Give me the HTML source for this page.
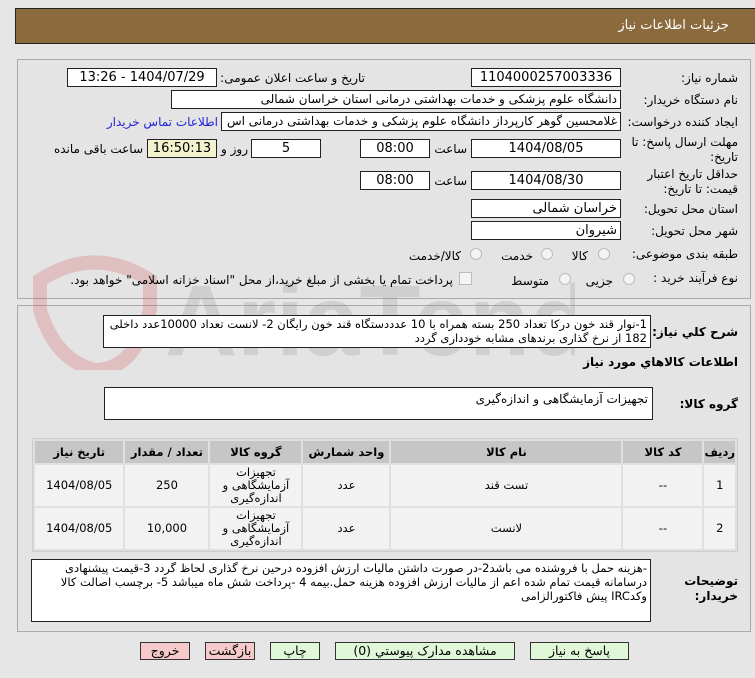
<!DOCTYPE html>
<html><head><meta charset="utf-8"><style>
*{box-sizing:border-box;margin:0;padding:0}
body{width:755px;height:678px;background:#e6e6e6;font-family:"DejaVu Sans",sans-serif;font-size:12px;color:#000;position:relative;overflow:hidden}
.a{position:absolute;white-space:nowrap}
.hd{left:15px;top:8px;width:745px;height:36px;background:#8b6a3e;border:1px solid #222;}
.hd span{position:absolute;right:30px;top:9px;color:#fff;font-size:13px}
.pn{position:absolute;border:1px solid #aaa;background:#e4e4e4}
.in{position:absolute;background:#fff;border:1px solid #222;height:19px;direction:rtl;text-align:center;line-height:17px;font-size:13px;overflow:hidden;white-space:nowrap}
.lb{position:absolute;direction:rtl;text-align:right;white-space:nowrap;font-size:12px}
.ta{position:absolute;background:#fff;border:1px solid #222;direction:rtl;text-align:right;padding:2px 4px;font-size:12px;line-height:20px}
.rd{position:absolute;width:12px;height:12px;border-radius:50%;border:1px solid #bbb;background:#f4f4f4}
table{position:absolute;left:32px;top:438px;width:706px;border-collapse:separate;border-spacing:2px;background:#e0e0e0;border:1px solid #ccc;direction:rtl}
th{background:#c6c6c6;height:22px;font-size:11.5px}
td{background:#f2f2f2;height:41px;text-align:center;font-size:11.5px;line-height:13px}
.bt{position:absolute;top:642px;height:18px;border:1px solid #333;font-size:12.5px;text-align:center;line-height:16px;direction:rtl}
</style></head><body>
<div class="a hd"><span>جزئیات اطلاعات نیاز</span></div>
<div class="pn" style="left:17px;top:59px;width:734px;height:240px"></div>
<div class="pn" style="left:17px;top:305px;width:734px;height:327px"></div>
<svg class="a" style="left:15px;top:240px;opacity:.22" width="560" height="130">
<path d="M25 40 Q80 5 135 40 L135 70 Q120 130 80 130 Q40 120 25 70Z" fill="none" stroke="#d04040" stroke-width="14"/>
<text x="150" y="115" font-size="100" font-family="Liberation Sans" font-weight="bold" fill="#888">AriaTender.neT</text>
</svg>

<div class="lb" style="right:17px;top:71px">شماره نیاز:</div>
<div class="in" style="left:471px;top:68px;width:150px">1104000257003336</div>
<div class="lb" style="right:390px;top:71px">تاریخ و ساعت اعلان عمومی:</div>
<div class="in" style="left:67px;top:68px;width:150px">1404/07/29 - 13:26</div>

<div class="lb" style="right:17px;top:93px">نام دستگاه خریدار:</div>
<div class="in" style="left:171px;top:90px;width:450px;text-align:right;padding-right:3px;font-size:12px">دانشگاه علوم پزشکی و خدمات بهداشتی درمانی استان خراسان شمالی</div>

<div class="lb" style="right:17px;top:115px">ایجاد کننده درخواست:</div>
<div class="in" style="left:221px;top:112px;width:400px;text-align:right;padding-right:3px;font-size:12px">غلامحسین گوهر کارپرداز  دانشگاه علوم پزشکی و خدمات بهداشتی درمانی اس</div>
<div class="lb" style="right:537px;top:115px;color:#2222dd">اطلاعات تماس خریدار</div>

<div class="lb" style="right:17px;top:135px;line-height:15px">مهلت ارسال پاسخ: تا<br>تاریخ:</div>
<div class="in" style="left:471px;top:139px;width:150px">1404/08/05</div>
<div class="lb" style="right:288px;top:142px">ساعت</div>
<div class="in" style="left:360px;top:139px;width:70px">08:00</div>
<div class="in" style="left:251px;top:139px;width:70px">5</div>
<div class="lb" style="right:507px;top:142px">روز و</div>
<div class="in" style="left:147px;top:139px;width:70px;background:#f2f2cc">16:50:13</div>
<div class="lb" style="right:612px;top:142px">ساعت باقی مانده</div>

<div class="lb" style="right:17px;top:167px;line-height:15px">حداقل تاریخ اعتبار<br>قیمت: تا تاریخ:</div>
<div class="in" style="left:471px;top:171px;width:150px">1404/08/30</div>
<div class="lb" style="right:288px;top:174px">ساعت</div>
<div class="in" style="left:360px;top:171px;width:70px">08:00</div>

<div class="lb" style="right:17px;top:202px">استان محل تحویل:</div>
<div class="in" style="left:471px;top:199px;width:150px;text-align:right;padding-right:3px">خراسان شمالی</div>
<div class="lb" style="right:17px;top:224px">شهر محل تحویل:</div>
<div class="in" style="left:471px;top:221px;width:150px;text-align:right;padding-right:3px">شیروان</div>

<div class="lb" style="right:17px;top:247px">طبقه بندی موضوعی:</div>
<div class="rd" style="left:598px;top:248px"></div><div class="lb" style="right:167px;top:249px">کالا</div>
<div class="rd" style="left:541px;top:248px"></div><div class="lb" style="right:222px;top:249px">خدمت</div>
<div class="rd" style="left:470px;top:248px"></div><div class="lb" style="right:294px;top:249px">کالا/خدمت</div>

<div class="lb" style="right:17px;top:271px">نوع فرآیند خرید :</div>
<div class="rd" style="left:623px;top:273px"></div><div class="lb" style="right:142px;top:274px">جزیی</div>
<div class="rd" style="left:559px;top:273px"></div><div class="lb" style="right:206px;top:274px">متوسط</div>
<div class="a" style="left:459px;top:272px;width:13px;height:13px;border:1px solid #bbb;background:#f4f4f4"></div>
<div class="lb" style="right:302px;top:273px">پرداخت تمام یا بخشی از مبلغ خرید،از محل "اسناد خزانه اسلامی" خواهد بود.</div>

<div class="lb" style="right:17px;top:325px;font-weight:bold">شرح کلي نیاز:</div>
<div class="ta" style="left:103px;top:315px;width:548px;height:33px;line-height:14px;padding:1px 3px;white-space:normal;font-size:11.5px">1-نوار قند خون  درکا  تعداد 250 بسته همراه با 10 عدددستگاه  قند خون رایگان 2- لانست  تعداد 10000عدد داخلی 182 از نرخ گذاری برندهای مشابه خودداری گردد</div>
<div class="lb" style="right:17px;top:355px;font-weight:bold">اطلاعات کالاهاي مورد نیاز</div>
<div class="lb" style="right:17px;top:397px;font-weight:bold">گروه کالا:</div>
<div class="ta" style="left:104px;top:387px;width:549px;height:33px;line-height:18px">تجهیزات آزمایشگاهی و اندازه‌گیری</div>

<table>
<tr><th style="width:27px">ردیف</th><th style="width:79px">کد کالا</th><th style="width:230px">نام کالا</th><th style="width:86px">واحد شمارش</th><th style="width:91px">گروه کالا</th><th style="width:83px">تعداد / مقدار</th><th>تاریخ نیاز</th></tr>
<tr><td>1</td><td>--</td><td>تست قند</td><td>عدد</td><td>تجهیزات<br>آزمایشگاهی و<br>اندازه‌گیری</td><td>250</td><td>1404/08/05</td></tr>
<tr><td>2</td><td>--</td><td>لانست</td><td>عدد</td><td>تجهیزات<br>آزمایشگاهی و<br>اندازه‌گیری</td><td>10,000</td><td>1404/08/05</td></tr>
</table>

<div class="lb" style="right:17px;top:574px;font-weight:bold;line-height:15px">توضیحات<br>خریدار:</div>
<div class="ta" style="left:31px;top:559px;width:620px;height:63px;line-height:14px;padding:1px 3px;white-space:normal;font-size:11.5px">-هزینه حمل با فروشنده می باشد2-در صورت داشتن مالیات ارزش افزوده درحین نرخ گذاری لحاظ گردد 3-قیمت پیشنهادی درسامانه  قیمت تمام شده اعم از مالیات ارزش افزوده هزینه حمل.بیمه  4 -پرداخت شش ماه میباشد 5- برچسب اصالت کالا وکدIRC پیش فاکتورالزامی</div>

<div class="bt" style="left:140px;width:50px;background:#f6caca">خروج</div>
<div class="bt" style="left:205px;width:50px;background:#f6caca">بازگشت</div>
<div class="bt" style="left:270px;width:50px;background:#e0f8d8">چاپ</div>
<div class="bt" style="left:335px;width:180px;background:#e0f8d8">مشاهده مدارک پیوستي (0)</div>
<div class="bt" style="left:530px;width:99px;background:#e0f8d8">پاسخ به نیاز</div>
</body></html>
